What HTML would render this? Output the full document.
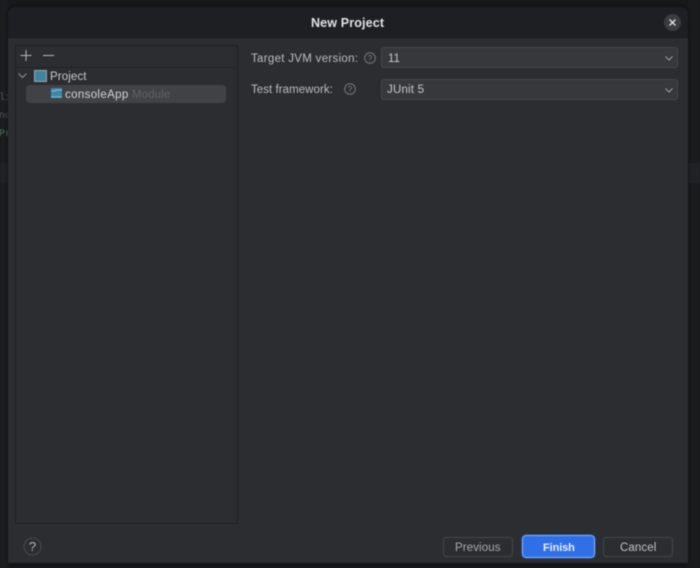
<!DOCTYPE html>
<html>
<head>
<meta charset="utf-8">
<style>
html,body{margin:0;padding:0;background:#17181a;}
body{width:700px;height:568px;position:relative;overflow:hidden;font-family:"Liberation Sans","DejaVu Sans",sans-serif;color:#c4c6cb;font-size:12px;filter:blur(.4px);}
.a{position:absolute;}
.t{position:absolute;white-space:nowrap;line-height:14px;}
</style>
</head>
<body>
<!-- background editor hints -->
<div class="a" style="left:0;top:0;width:8px;height:568px;background:#1c1d1f"></div>
<div class="a" style="left:688px;top:0;width:12px;height:568px;background:#1a1b1d"></div>
<div class="a" style="left:688px;top:163px;width:12px;height:20px;background:#212225"></div>
<div class="a" style="left:0;top:163px;width:8px;height:20px;background:#212225"></div>
<div class="t" style="left:-1px;top:93px;font:10px 'Liberation Mono',monospace;color:#555">li</div>
<div class="t" style="left:-1px;top:111px;font:10px 'Liberation Mono',monospace;color:#555">nc</div>
<div class="t" style="left:-1px;top:129px;font:10px 'Liberation Mono',monospace;color:#437a5a">Pr</div>

<!-- dialog -->
<div class="a" style="left:8px;top:7px;width:680px;height:556px;background:#2b2d30;border-radius:8px 8px 0 0;box-shadow:0 0 3px #0c0c0d;overflow:hidden">
  <div class="a" style="left:0;top:0;width:680px;height:30px;background:#1e1f22;border-bottom:1px solid #18191b"></div>
</div>
<div class="t" style="left:311px;top:16px;font-size:12.500px;font-weight:bold;color:#dfe1e5;letter-spacing:.15px">New Project</div>
<div class="a" style="left:664px;top:14px;width:17px;height:17px;border-radius:50%;background:#3a3c3f"></div>
<svg class="a" style="left:664px;top:14px" width="17" height="17"><path d="M5.500 5.500L11.500 11.500M11.500 5.500L5.500 11.500" stroke="#e3e4e6" stroke-width="1.300"/></svg>

<!-- left panel -->
<div class="a" style="left:15px;top:45px;width:221px;height:477px;border:1px solid #1f2023;background:#2b2d30"></div>
<div class="a" style="left:16px;top:67px;width:220px;height:1px;background:#222326"></div>
<div class="a" style="left:233px;top:46px;width:1px;height:476px;background:#28292c"></div>
<svg class="a" style="left:19px;top:48px" width="40" height="16"><path d="M7 2V13M1.500 7.500H12.500M24 7.500H35" stroke="#b4b6ba" stroke-width="1" fill="none"/></svg>
<svg class="a" style="left:17px;top:71px" width="11" height="9"><path d="M1.500 2.500L5.500 6.500L9.500 2.500" stroke="#85888d" stroke-width="1.200" fill="none"/></svg>
<div class="a" style="left:34px;top:70px;width:11px;height:10px;border:1px solid #a0a3a7;background:#3e86a0"></div>
<div class="t" style="left:50px;top:70px;font-size:11.500px;color:#c8cacd;letter-spacing:.1px">Project</div>
<div class="a" style="left:26px;top:85px;width:200px;height:18px;background:#404246;border-radius:4px"></div>
<svg class="a" style="left:51px;top:88px" width="11" height="10"><rect width="11" height="10" fill="#3f86a8"/><path d="M0 3H4L5 2H11" stroke="#7fc4de" stroke-width="1" fill="none"/><rect y="8" width="11" height="2" fill="#5ea6c4"/></svg>
<div class="t" style="left:65px;top:88px;font-size:11.500px;color:#d2d4d7;letter-spacing:.35px">consoleApp</div>
<div class="t" style="left:132px;top:88px;font-size:11.500px;color:#5f6165;letter-spacing:.1px">Module</div>

<!-- form -->
<div class="t" style="left:251px;top:52px;font-size:11.500px;color:#bcbec3;letter-spacing:.3px">Target JVM version:</div>
<svg class="a" style="left:364px;top:52px" width="12" height="12"><circle cx="6" cy="6" r="5.300" fill="none" stroke="#77797d"/><text x="6" y="9" font-size="8" text-anchor="middle" fill="#85878b" font-family="Liberation Sans">?</text></svg>
<div class="a" style="left:381px;top:47px;width:297px;height:21px;box-sizing:border-box;background:#36383c;border:1px solid #45474b;border-radius:3px"></div>
<div class="t" style="left:388px;top:52px;font-size:11.500px;color:#c8cacd">11</div>
<svg class="a" style="left:664px;top:55px" width="10" height="7"><path d="M1.500 1.500L5 5L8.500 1.500" stroke="#9a9ca0" stroke-width="1.100" fill="none"/></svg>

<div class="t" style="left:251px;top:83px;font-size:11.500px;color:#bcbec3;letter-spacing:.05px">Test framework:</div>
<svg class="a" style="left:344px;top:83px" width="12" height="12"><circle cx="6" cy="6" r="5.300" fill="none" stroke="#77797d"/><text x="6" y="9" font-size="8" text-anchor="middle" fill="#85878b" font-family="Liberation Sans">?</text></svg>
<div class="a" style="left:381px;top:79px;width:297px;height:21px;box-sizing:border-box;background:#36383c;border:1px solid #45474b;border-radius:3px"></div>
<div class="t" style="left:387px;top:83px;font-size:11.500px;color:#c8cacd;letter-spacing:.2px">JUnit 5</div>
<svg class="a" style="left:664px;top:87px" width="10" height="7"><path d="M1.500 1.500L5 5L8.500 1.500" stroke="#9a9ca0" stroke-width="1.100" fill="none"/></svg>

<!-- bottom -->
<svg class="a" style="left:23px;top:537px" width="19" height="19"><circle cx="9.500" cy="9.500" r="8.500" fill="#2b2d30" stroke="#47494d"/><text x="9.500" y="14" font-size="13" text-anchor="middle" fill="#b4b6ba" font-family="Liberation Sans">?</text></svg>
<div class="a" style="left:443px;top:537px;width:70px;height:20px;box-sizing:border-box;border:1px solid #45474b;border-radius:3px"></div>
<div class="t" style="left:455px;top:541px;font-size:11.500px;color:#a9abaf;letter-spacing:.1px">Previous</div>
<div class="a" style="left:522px;top:535px;width:73px;height:23px;box-sizing:border-box;background:#2f6fe8;border:1px solid #8fb3ee;outline:1px solid #1f4487;border-radius:4px"></div>
<div class="t" style="left:543px;top:541px;font-size:11px;font-weight:bold;color:#e8eefb;letter-spacing:-.1px">Finish</div>
<div class="a" style="left:603px;top:537px;width:70px;height:20px;box-sizing:border-box;border:1px solid #45474b;border-radius:3px"></div>
<div class="t" style="left:620px;top:541px;font-size:11.500px;color:#c2c4c8;letter-spacing:.1px">Cancel</div>
</body>
</html>
